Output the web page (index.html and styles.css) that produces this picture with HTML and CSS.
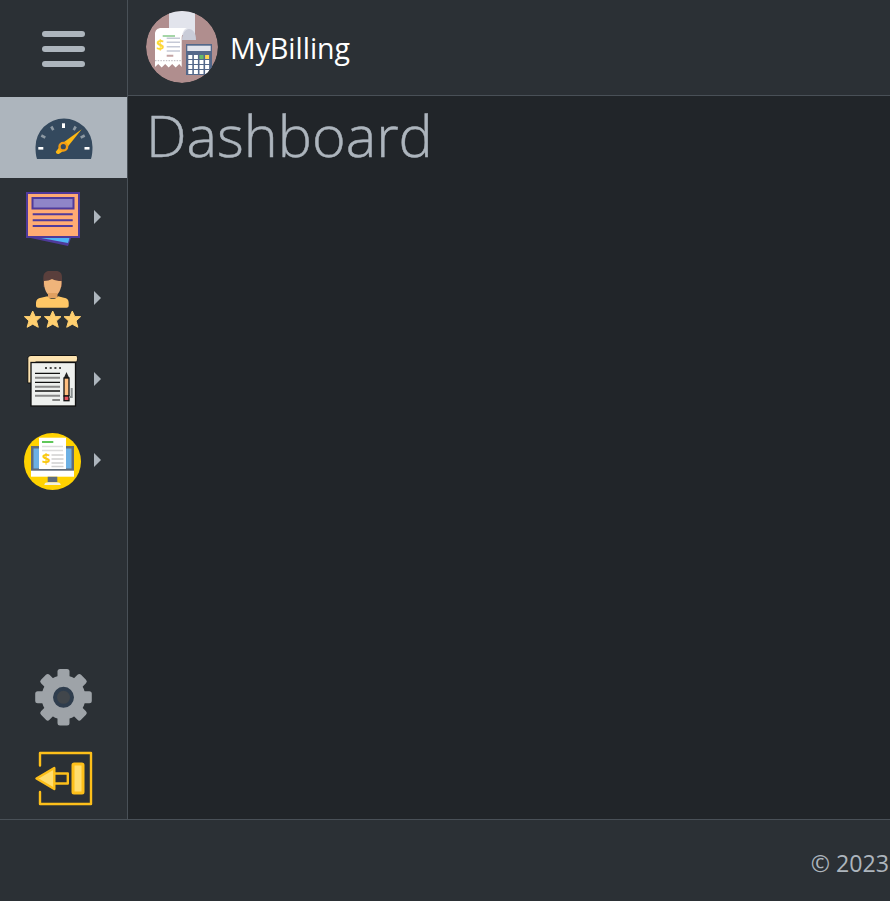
FILE: index.html
```html
<!DOCTYPE html>
<html lang="en">
<head>
<meta charset="utf-8">
<title>MyBilling</title>
<link rel="stylesheet" href="styles.css">
</head>
<body>
<div class="app">
  <aside class="sidebar">
    <button class="burger" type="button" aria-label="Menu"><span></span><span></span><span></span></button>
    <nav class="nav">
      <a class="item active">
        <svg class="icon" viewBox="0 0 58 58">
          <path fill="#34495e" d="M2 50C.8 46.500.5 42 .5 38a28.500 28.500 0 0 1 57 0c0 4-.3 8.500-1.500 12z"/>
          <g fill="#fff"><rect x="27" y="14.300" width="3" height="4.700"/><rect x="3.300" y="38" width="5" height="2.600"/><rect x="49.500" y="38" width="5" height="2.600"/></g>
          <g stroke="#8d99a3" stroke-width="2.600"><path d="M16.300 17.500l2 3.600M6.300 26.500l4 2.200M40.700 17.500l-2 3.600M49.700 26.500l-4 2.200"/></g>
          <path fill="#fdb813" d="M46.700 20.300L30.700 40.300l-4.800-5.100z"/>
          <path fill="#fdb813" d="M21 42.500l5-6.500 4.500 4.500-6.700 4.400c-1.500.8-3.300-1-2.800-2.400z"/>
          <circle cx="28.300" cy="37.700" r="3.800" fill="#34495e" stroke="#f39c12" stroke-width="2.400"/>
        </svg>
      </a>
      <a class="item">
        <svg class="icon" viewBox="0 0 58 58">
          <path fill="#4f3a9b" d="M2 47l42 9 3-8z"/>
          <path fill="#4fb6f5" d="M17 48l27 5 1.500-5z"/>
          <rect x="3" y="3" width="52" height="44" fill="#ffab73" stroke="#4f3a9b" stroke-width="2"/>
          <rect x="8.500" y="8" width="41" height="10.500" fill="#8f85c8" stroke="#4f3a9b" stroke-width="2"/>
          <path stroke="#4f3a9b" stroke-width="2" d="M8.700 24.300h40M8.700 30.300h40M8.700 36h40"/>
        </svg>
        <i class="caret"></i>
      </a>
      <a class="item">
        <svg class="icon" viewBox="0 0 58 58">
          <path fill="#5a3f3c" d="M19.300 7C19.300 2 22 0 25 0h7c4 0 6 2 6 7v9H19.300z"/>
          <path fill="#efb47a" d="M20 10c3 0 6-1 8-2 3 1.500 6 2 9.500 2 .5 7-3 15.500-8.800 15.500S19.500 17 20 10z"/>
          <path fill="#e0a060" d="M24 22h9.500v5h-9.500z"/>
          <path fill="#ffc766" d="M14 36.700c-1.200 0-2-.8-2-2v-3c0-3 2-4.500 5-5l6.500-1.500c2 3.500 8.500 3.500 10.500 0l6 1.500c3 .5 4.700 2 4.700 5v3c0 1.200-.8 2-2 2z"/>
          <g fill="#ffcf70" stroke="#ffcf70" stroke-linejoin="round">
            <path d="M8.700 40l2.470 5.600 5.860 0-4.570 4.300 1.830 6.380-5.590-3.080-5.590 3.080 1.830-6.380-4.570-4.300 5.860 0z"/>
            <path d="M28.700 40l2.470 5.600 5.860 0-4.570 4.300 1.830 6.380-5.590-3.080-5.590 3.080 1.830-6.380-4.570-4.300 5.860 0z"/>
            <path d="M48.300 40l2.470 5.600 5.860 0-4.570 4.300 1.830 6.380-5.590-3.080-5.590 3.080 1.830-6.380-4.570-4.300 5.860 0z"/>
          </g>
        </svg>
        <i class="caret"></i>
      </a>
      <a class="item">
        <svg class="icon" viewBox="0 0 58 58">
          <path fill="#fde3b0" stroke="#111" d="M3.800 31V6.500C3.800 4.500 5.500 3.500 7 3.500h45c1 0 1.500 1 1.500 3s-.5 3.500-1.500 3.500H11.500v21z"/>
          <rect x="7" y="10.500" width="44.500" height="43.500" fill="#eef0ee" stroke="#111" stroke-width="1.300"/>
          <path stroke="#111" stroke-width="1.300" d="M11 21.300h25M11 30.300h25M11 39h25"/>
          <path stroke="#888" stroke-width="2" d="M11 25.700h25M11 34.700h25M11 43.700h25"/>
          <path stroke="#555" stroke-width="1.400" d="M28.300 48h7.700"/>
          <path stroke="#111" stroke-width="1.700" stroke-dasharray="2 2.700" d="M21 16h16"/>
          <path fill="#222" d="M42.500 20l-2.700 6h5.400z"/>
          <rect x="40" y="26" width="5" height="18" fill="#ffbf80" stroke="#111" stroke-width="1.300"/>
          <rect x="40" y="44" width="5" height="4.700" fill="#e8555f" stroke="#111" stroke-width="1.300"/>
          <path fill="none" stroke="#8a8f90" stroke-width="2" d="M47.700 36v9H45"/>
        </svg>
        <i class="caret"></i>
      </a>
      <a class="item">
        <svg class="icon" viewBox="0 0 58 58">
          <circle cx="28.500" cy="28.500" r="28.500" fill="#ffd200"/>
          <rect x="7" y="13" width="43" height="25" fill="#5f6b7a"/>
          <rect x="9.500" y="15.500" width="38" height="20" fill="#6cb0e4"/>
          <rect x="7" y="37.700" width="43" height="6" fill="#fff"/>
          <path fill="#5f6b7a" d="M23.700 43.700h9.600v5.600h-9.600z"/>
          <path fill="#f3f1df" d="M20.300 52c0-2 2-2.700 4-2.700h8.400c2 0 4 .7 4 2.700z"/>
          <rect x="15" y="4.700" width="27" height="31.300" fill="#fff"/>
          <rect x="18" y="8" width="11.300" height="2" fill="#5fc75a"/>
          <path stroke="#dcdcdc" stroke-width="1.300" d="M18 13.500h21M18 17.500h21"/>
          <path stroke="#d0d0d0" stroke-width="1.500" d="M27.500 22h12M27.500 26h12M27.500 30h12M27.500 33.500h12"/>
          <text class="dollar" x="18" y="31">$</text>
        </svg>
        <i class="caret"></i>
      </a>
    </nav>
    <div class="nav-bottom">
      <a class="item">
        <svg class="icon" viewBox="0 0 58 58">
          <g fill="#9ea3a8">
            <circle cx="28.500" cy="28.300" r="22"/>
            <rect x="22.500" y="0" width="12" height="56.600" rx="2.500"/>
            <rect x="22.500" y="0" width="12" height="56.600" rx="2.500" transform="rotate(45 28.500 28.300)"/>
            <rect x="22.500" y="0" width="12" height="56.600" rx="2.500" transform="rotate(90 28.500 28.300)"/>
            <rect x="22.500" y="0" width="12" height="56.600" rx="2.500" transform="rotate(135 28.500 28.300)"/>
          </g>
          <circle cx="28.500" cy="28.300" r="8.500" fill="#41464b" stroke="#2f3d4d" stroke-width="4"/>
        </svg>
      </a>
      <a class="item">
        <svg class="icon" viewBox="0 0 58 58">
          <path fill="none" stroke="#fdbf1a" stroke-width="2.400" stroke-linecap="round" stroke-linejoin="round" d="M5 15.500V3h51v51H5V42"/>
          <rect x="38" y="14" width="10" height="29" rx="1" fill="#ffdd6e" stroke="#fdbf1a" stroke-width="3"/>
          <path fill="none" stroke="#fdbf1a" stroke-width="2.400" stroke-linejoin="round" d="M19.300 23.500h13.500v10H19.300"/>
          <path fill="#ffdd6e" stroke="#fdbf1a" stroke-width="2.400" stroke-linejoin="round" d="M19.300 18v21L1.500 28.500z"/>
        </svg>
      </a>
    </div>
  </aside>
  <div class="content">
    <header class="topbar">
      <svg class="logo" viewBox="0 0 72 72">
        <defs><clipPath id="round"><circle cx="36" cy="36" r="36"/></clipPath></defs>
        <g clip-path="url(#round)">
          <circle cx="36" cy="36" r="36" fill="#b08e8e"/>
          <path fill="#e2e4ec" d="M23 0h26v24H23z"/>
          <path fill="#c9ccd8" d="M36 29c0-6 3-11 7-11s7 4 7 11z"/>
          <path fill="#fff" d="M9 56V23c0-4 3-6 6-6h26c-3 1-5.300 5-5.300 11v28l-2.500-3-3.500 3.500-3.500-3.500-3.500 3.500-3.500-3.500-3.500 3.500-3.500-3.500z"/>
          <path stroke="#a5d6a7" stroke-width="2" d="M16.700 25H29"/>
          <path stroke="#c5c9d6" stroke-width="1.600" d="M20.700 27.300H34M20.700 31.300H34M20.700 35.700H34M20.700 40H34"/>
          <path stroke="#c4a4a4" stroke-width="2" d="M20.700 44.700h6.600"/>
          <path stroke="#b9b4bb" stroke-dasharray="1.500 1.200" d="M9 49.700h26.500"/>
          <text class="logo-dollar" x="10.500" y="39">$</text>
          <rect x="40" y="33" width="26" height="31" fill="#54688a"/>
          <rect x="41.300" y="34.700" width="23.400" height="5.300" fill="#e2e4ec"/>
          <g fill="#fff">
            <rect x="42.300" y="44" width="4" height="4"/><rect x="47.900" y="44" width="4" height="4"/><rect x="53.500" y="44" width="4" height="4" fill="#66bb6a"/><rect x="59.100" y="44" width="4" height="4" fill="#ffd54f"/>
            <rect x="42.300" y="49" width="4" height="4"/><rect x="47.900" y="49" width="4" height="4"/><rect x="53.500" y="49" width="4" height="4"/><rect x="59.100" y="49" width="4" height="4"/>
            <rect x="42.300" y="54" width="4" height="4"/><rect x="47.900" y="54" width="4" height="4"/><rect x="53.500" y="54" width="4" height="4"/><rect x="59.100" y="54" width="4" height="4"/>
            <rect x="42.300" y="59" width="4" height="4"/><rect x="47.900" y="59" width="4" height="4"/><rect x="53.500" y="59" width="4" height="4"/><rect x="59.100" y="59" width="4" height="4"/>
          </g>
        </g>
      </svg>
      <span class="brand">MyBilling</span>
    </header>
    <main class="main"><h1 class="title">Dashboard</h1></main>
  </div>
  <footer class="footer">© 2023</footer>
</div>
</body>
</html>
```
FILE: styles.css
```css
* { box-sizing: border-box; }
html, body { margin: 0; height: 100%; overflow: hidden; }
body {
  background: #212529;
  color: #adb5bd;
  font-family: "Open Sans", "Noto Sans", sans-serif;
}
.app {
  display: grid;
  grid-template-columns: 128px 1fr;
  grid-template-rows: 819px 82px;
  height: 901px;
}
.sidebar {
  display: flex;
  flex-direction: column;
  background: #2b3035;
  border-right: 1px solid #495057;
}
.burger {
  display: flex;
  flex-direction: column;
  align-items: center;
  justify-content: center;
  gap: 9px;
  height: 97px;
  flex: none;
  padding: 1px 0 0;
  margin: 0;
  border: 0;
  background: none;
}
.burger span {
  display: block;
  width: 43px;
  height: 6px;
  border-radius: 3px;
  background: #adb5bd;
}
.nav { display: flex; flex-direction: column; }
.nav-bottom { display: flex; flex-direction: column; margin-top: auto; }
.item {
  display: flex;
  align-items: center;
  justify-content: center;
  gap: 12px;
  height: 81px;
}
.active { background: #adb5bd; }
.icon { width: 58px; height: 58px; flex: none; display: block; }
.caret {
  width: 0;
  height: 0;
  margin: 0 2px 3px 0;
  border-style: solid;
  border-width: 7px 0 7px 7px;
  border-color: transparent transparent transparent #adb5bd;
}
.dollar { font: 700 15px "Open Sans", sans-serif; fill: #f9c80e; }
.logo-dollar { font: 700 14px "Open Sans", sans-serif; fill: #fdd835; }
.content { display: flex; flex-direction: column; min-width: 0; }
.topbar {
  display: flex;
  align-items: center;
  gap: 12px;
  height: 96px;
  flex: none;
  padding: 0 18px 0;
  background: #2b3035;
  border-bottom: 1px solid #495057;
}
.logo { width: 72px; height: 72px; flex: none; margin-bottom: 1px; }
.brand { font-size: 28.500px; color: #fff; padding-top: 1px; }
.main { flex: 1; padding: 0 18px; }
.title {
  margin: 0;
  font-size: 57.500px;
  font-weight: 300;
  line-height: 79px;
  color: #adb5bd;
  -webkit-text-stroke: 0.5px #adb5bd;
}
.footer {
  grid-column: 1 / -1;
  display: flex;
  align-items: center;
  justify-content: flex-end;
  padding: 5px 1px 0 0;
  background: #2b3035;
  border-top: 1px solid #495057;
  font-size: 23.200px;
}
```
